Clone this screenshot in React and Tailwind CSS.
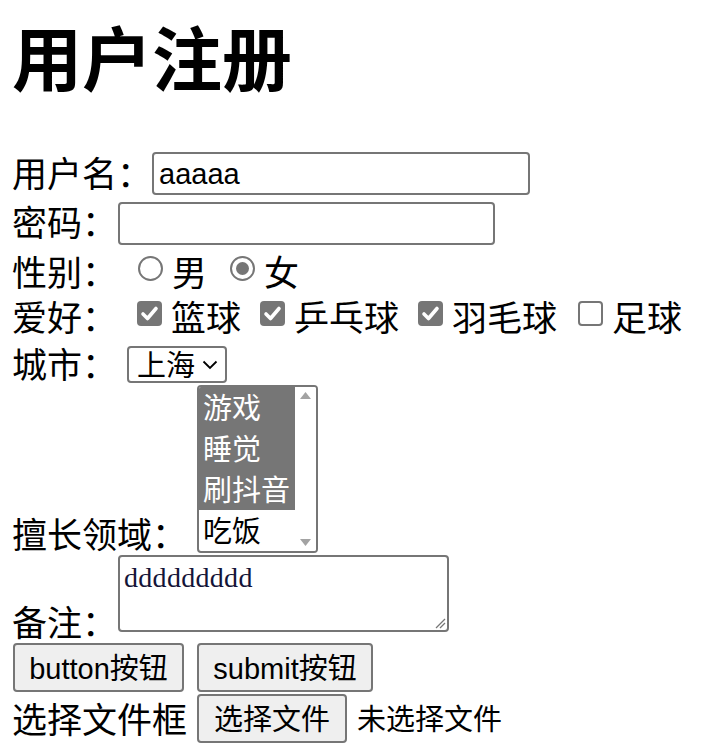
function Radio({ checked }) {
  return (
    <span className="mt-[3px] flex h-[25px] w-[25px] shrink-0 items-center justify-center rounded-full border-2 border-[#767676] bg-white">
      {checked && <span className="block h-[13px] w-[13px] rounded-full bg-[#767676]" />}
    </span>
  );
}

function Check({ checked }) {
  if (!checked)
    return <span className="mt-[3px] block h-[25px] w-[25px] shrink-0 rounded-[4px] border-2 border-[#767676] bg-white" />;
  return (
    <span className="mt-[3px] flex h-[25px] w-[25px] shrink-0 items-center justify-center rounded-[4px] bg-[#767676]">
      <svg width="25" height="25" viewBox="0 0 25 25">
        <polyline points="6,13 10.5,17.5 19,7.5" fill="none" stroke="white" strokeWidth="3.6" strokeLinecap="round" strokeLinejoin="round" />
      </svg>
    </span>
  );
}

const L = "text-[35px] leading-[35px] whitespace-nowrap";
const C = "font-['Liberation_Sans','Noto_Sans_CJK_SC',sans-serif] text-[29px] leading-[29px] whitespace-nowrap";

export default function App() {
  return (
    <div className="min-h-[748px] w-[720px] overflow-hidden bg-white pl-[12px] text-black font-['Noto_Sans_CJK_SC',sans-serif]">
      <h1 className="h-[152px] pt-[21px] text-[70px] leading-[70px] font-bold">用户注册</h1>

      <div className="flex h-[50px] items-start">
        <span className={`${L} mt-[2px]`}>用户名：</span>
        <div className={`${C} flex h-[43px] w-[378px] items-center rounded-[4px] border-2 border-[#767676] bg-white pl-[5px] pt-[2px]`}>aaaaa</div>
      </div>

      <div className="flex h-[51px] items-start">
        <span className={`${L} mt-[1px]`}>密码：</span>
        <div className="ml-[1px] h-[43px] w-[377px] rounded-[4px] border-2 border-[#767676] bg-white" />
      </div>

      <div className="flex h-[45px] items-start">
        <span className={L}>性别：</span>
        <span className="ml-[21px] flex"><Radio /></span>
        <span className={`${L} ml-[9px]`}>男</span>
        <span className="ml-[23px] flex"><Radio checked /></span>
        <span className={`${L} ml-[9px]`}>女</span>
      </div>

      <div className="flex h-[47px] items-start">
        <span className={L}>爱好：</span>
        <span className="ml-[20px] flex"><Check checked /></span>
        <span className={`${L} ml-[9px]`}>篮球</span>
        <span className="ml-[19px] flex"><Check checked /></span>
        <span className={`${L} ml-[9px]`}>乒乓球</span>
        <span className="ml-[19px] flex"><Check checked /></span>
        <span className={`${L} ml-[9px]`}>羽毛球</span>
        <span className="ml-[21px] flex"><Check /></span>
        <span className={`${L} ml-[9px]`}>足球</span>
      </div>

      <div className="flex h-[40px] items-start">
        <span className={L}>城市：</span>
        <div className="ml-[10px] mt-[1px] flex h-[37px] w-[100px] items-center rounded-[4px] border-2 border-[#767676] bg-white pl-[8px] pt-[3px]">
          <span className={C}>上海</span>
          <svg className="ml-[7px] mb-[2px]" width="16" height="10" viewBox="0 0 16 10">
            <polyline points="1.5,1.5 8,8 14.5,1.5" fill="none" stroke="black" strokeWidth="1.8" />
          </svg>
        </div>
      </div>

      <div className="flex h-[168px] items-end">
        <span className={`${L} mb-[3px]`}>擅长领域：</span>
        <div className="ml-[10px] flex h-[168px] w-[121px] overflow-hidden rounded-[4px] border-2 border-[#767676] bg-white">
          <div className="flex w-[96px] flex-col">
            {["游戏", "睡觉", "刷抖音"].map((t) => (
              <div key={t} className={`${C} flex h-[41px] items-center bg-[#767676] pl-[4px] pt-[3px] text-white`}>{t}</div>
            ))}
            <div className={`${C} flex h-[41px] items-center pl-[4px] pt-[3px]`}>吃饭</div>
          </div>
          <div className="flex flex-1 flex-col items-center justify-between bg-white py-[5px]">
            <svg width="11" height="7" viewBox="0 0 11 7"><polygon points="5.5,0 11,7 0,7" fill="#a3a3a3" /></svg>
            <svg width="11" height="7" viewBox="0 0 11 7"><polygon points="0,0 11,0 5.5,7" fill="#a3a3a3" /></svg>
          </div>
        </div>
      </div>

      <div className="flex h-[90px] items-start">
        <span className={`${L} mt-[50px]`}>备注：</span>
        <div className="relative ml-[1px] mt-[2px] h-[77px] w-[331px] rounded-[4px] border-2 border-[#767676] bg-white pl-[4px] pt-[5px]">
          <span className="font-['Liberation_Serif',serif] text-[28px] leading-[32px] tracking-[0.3px] text-[#141438]">ddddddddd</span>
          <svg className="absolute bottom-[1px] right-[1px]" width="12" height="12" viewBox="0 0 12 12">
            <line x1="2" y1="11" x2="11" y2="2" stroke="#767676" strokeWidth="1.2" />
            <line x1="6" y1="11" x2="11" y2="6" stroke="#767676" strokeWidth="1.2" />
          </svg>
        </div>
      </div>

      <div className="flex h-[51px] items-start">
        <div className={`${C} ml-[1px] flex h-[49px] w-[171px] items-center justify-center rounded-[4px] border-2 border-[#767676] bg-[#efefef] pt-[4px]`}>button按钮</div>
        <div className={`${C} ml-[13px] flex h-[49px] w-[176px] items-center justify-center rounded-[4px] border-2 border-[#767676] bg-[#efefef] pt-[4px]`}>submit按钮</div>
      </div>

      <div className="flex h-[54px] items-start">
        <span className={`${L} mt-[6px]`}>选择文件框</span>
        <div className={`${C} ml-[10px] flex h-[49px] w-[150px] items-center justify-center rounded-[4px] border-2 border-[#767676] bg-[#efefef] pt-[4px]`}>选择文件</div>
        <span className={`${C} ml-[10px] mt-[12px]`}>未选择文件</span>
      </div>
    </div>
  );
}
